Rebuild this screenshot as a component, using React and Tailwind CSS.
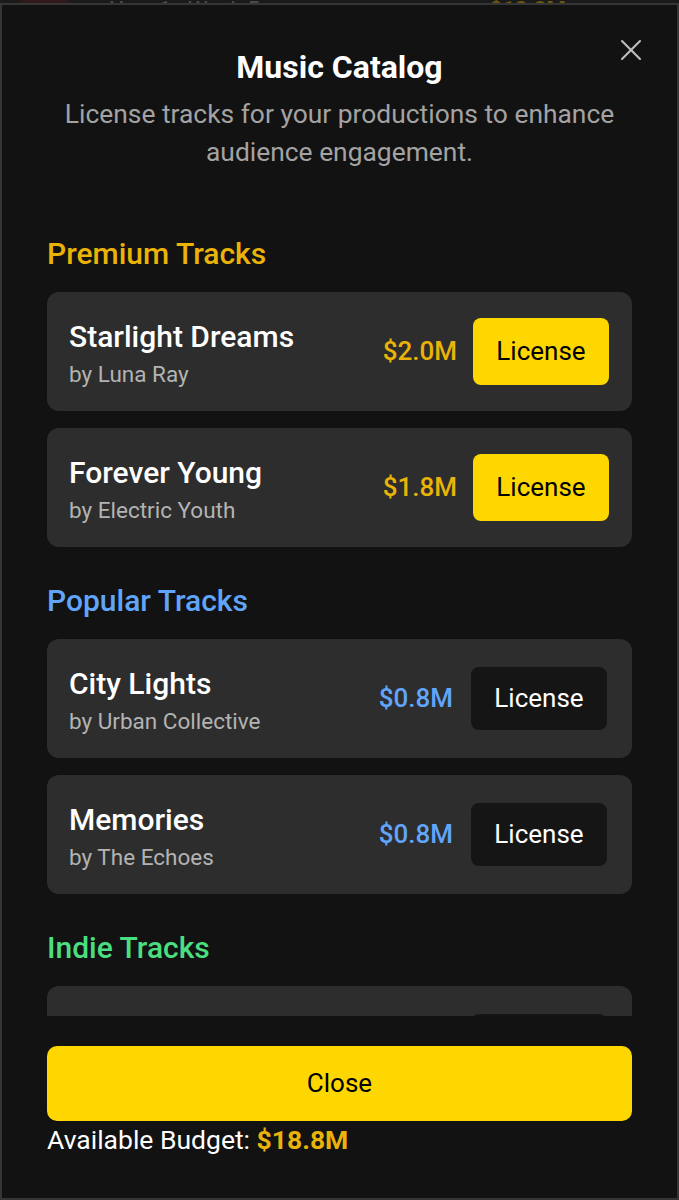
import React from 'react';
import { X } from 'lucide-react';

const sections = [
  {
    title: 'Premium Tracks',
    color: 'text-[#eab308]',
    tier: 'premium',
    tracks: [
      { name: 'Starlight Dreams', artist: 'Luna Ray', price: '$2.0M' },
      { name: 'Forever Young', artist: 'Electric Youth', price: '$1.8M' },
    ],
  },
  {
    title: 'Popular Tracks',
    color: 'text-[#60a5fa]',
    tier: 'popular',
    tracks: [
      { name: 'City Lights', artist: 'Urban Collective', price: '$0.8M' },
      { name: 'Memories', artist: 'The Echoes', price: '$0.8M' },
    ],
  },
  {
    title: 'Indie Tracks',
    color: 'text-[#4ade80]',
    tier: 'indie',
    tracks: [
      { name: 'Summer Haze', artist: 'Pale Waves', price: '$0.3M' },
      { name: 'Quiet Streets', artist: 'Night Owl', price: '$0.2M' },
    ],
  },
];

function TrackCard({ track, tier, color }) {
  const premium = tier === 'premium';
  return (
    <div className="flex items-center justify-between rounded-[12px] bg-[#2d2d2d] h-[119px] pl-[22px] pr-[23px]">
      <div className="flex flex-col pt-[6px]">
        <span className="text-[30px] leading-[34px] font-medium text-white">{track.name}</span>
        <span className="text-[22.5px] leading-[30px] text-[#b3b3b3] mt-[5px]">by {track.artist}</span>
      </div>
      <div className="flex items-center">
        <span className={`text-[26px] font-medium ${color}`}>{track.price}</span>
        {premium ? (
          <button className="ml-4 w-[136px] h-[67px] rounded-[8px] bg-[#ffd700] text-black text-[26px] font-normal">
            License
          </button>
        ) : (
          <button className="ml-[18px] mr-[2px] w-[136px] h-[63px] rounded-[8px] bg-[#151515] text-white text-[26px] font-normal">
            License
          </button>
        )}
      </div>
    </div>
  );
}

export default function App() {
  return (
    <div className="h-[1200px] overflow-hidden bg-[#1a1a1a] font-['Roboto','Liberation_Sans',sans-serif]">
      {/* page behind the modal, mostly hidden */}
      <div className="h-[3px] overflow-hidden opacity-40">
        <div className="flex items-end h-[3px]">
          <div className="flex items-center gap-10 px-5 h-[20px] -mb-[17px]">
            <div className="w-[50px] h-[20px] bg-[#5a1a1a] rounded" />
            <span className="text-[22px] text-[#9a9a9a] leading-[20px]">Year 1 · Week 5</span>
            <span className="ml-[190px] text-[22px] text-[#eab308] font-bold leading-[20px]">$18.8M</span>
          </div>
        </div>
      </div>

      {/* modal */}
      <div className="relative h-[1197px] border-2 border-[#353535] bg-[#121212] flex flex-col px-[45px]">
        <button className="absolute right-[28px] top-[27px] text-[#bdbdbd]">
          <X className="w-[36px] h-[36px]" strokeWidth={1.4} />
        </button>

        <h2 className="mt-[44px] text-center text-[32px] leading-[36px] font-bold text-white">Music Catalog</h2>
        <p className="mt-[10px] text-center text-[26.4px] leading-[38px] text-[#a3a3a3]">
          License tracks for your productions to enhance audience engagement.
        </p>

        <div className="mt-[65px] h-[780px] overflow-hidden">
          {sections.map((s, i) => (
            <div key={s.title} className={i > 0 ? 'mt-[36px]' : ''}>
              <h3 className={`text-[30px] leading-[36px] font-medium ${s.color}`}>{s.title}</h3>
              <div className="mt-[20px] flex flex-col gap-[17px]">
                {s.tracks.map((t) => (
                  <TrackCard key={t.name} track={t} tier={s.tier} color={s.color} />
                ))}
              </div>
            </div>
          ))}
        </div>

        <button className="mt-[30px] h-[75px] w-full rounded-[10px] bg-[#ffd700] text-black text-[26px]">
          Close
        </button>
        <p className="mt-[2px] text-[26.5px] leading-[34px] text-white">
          Available Budget: <span className="font-bold text-[#eab308]">$18.8M</span>
        </p>
      </div>
    </div>
  );
}
